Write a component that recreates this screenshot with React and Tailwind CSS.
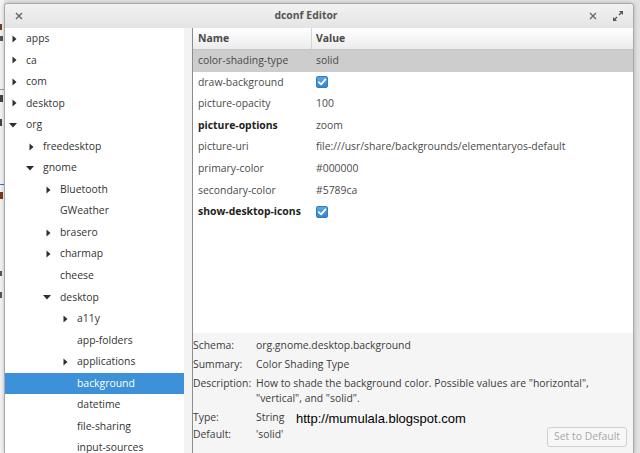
import React from "react";

const tree = [
  { name: "apps", level: 0, arrow: "right" },
  { name: "ca", level: 0, arrow: "right" },
  { name: "com", level: 0, arrow: "right" },
  { name: "desktop", level: 0, arrow: "right" },
  { name: "org", level: 0, arrow: "down" },
  { name: "freedesktop", level: 1, arrow: "right" },
  { name: "gnome", level: 1, arrow: "down" },
  { name: "Bluetooth", level: 2, arrow: "right" },
  { name: "GWeather", level: 2 },
  { name: "brasero", level: 2, arrow: "right" },
  { name: "charmap", level: 2, arrow: "right" },
  { name: "cheese", level: 2 },
  { name: "desktop", level: 2, arrow: "down" },
  { name: "a11y", level: 3, arrow: "right" },
  { name: "app-folders", level: 3 },
  { name: "applications", level: 3, arrow: "right" },
  { name: "background", level: 3, selected: true },
  { name: "datetime", level: 3 },
  { name: "file-sharing", level: 3 },
  { name: "input-sources", level: 3 },
];

const indent = ["pl-[4px]", "pl-[21px]", "pl-[38px]", "pl-[55px]"];

const keys = [
  { name: "color-shading-type", value: "solid", selected: true },
  { name: "draw-background", check: true },
  { name: "picture-opacity", value: "100" },
  { name: "picture-options", value: "zoom", bold: true },
  { name: "picture-uri", value: "file:///usr/share/backgrounds/elementaryos-default" },
  { name: "primary-color", value: "#000000" },
  { name: "secondary-color", value: "#5789ca" },
  { name: "show-desktop-icons", check: true, bold: true },
];

function Arrow({ dir }) {
  return (
    <svg width="8" height="8" viewBox="0 0 8 8" className="shrink-0">
      {dir === "right" && <polygon points="3.5,0.5 7.5,4 3.5,7.5" fill="#2e2e2e" />}
      {dir === "down" && <polygon points="0,2 8,2 4,6.5" fill="#2e2e2e" />}
    </svg>
  );
}

function Check() {
  return (
    <span className="flex h-[12px] w-[12px] items-center justify-center rounded-[2px] border border-[#2f7dc4] bg-gradient-to-b from-[#5aa6e6] to-[#3486d0]">
      <svg width="10" height="10" viewBox="0 0 10 10">
        <path d="M1.8 5.2 L4.1 7.4 L8.4 2.4" fill="none" stroke="#fff" strokeWidth="1.8" strokeLinecap="round" strokeLinejoin="round" />
      </svg>
    </span>
  );
}

export default function App() {
  return (
    <div
      className="flex h-[453px] w-[640px] overflow-hidden bg-[#e6e6e6] text-[10.4px]"
      style={{ fontFamily: '"Open Sans", "DejaVu Sans", sans-serif' }}
    >
      {/* bit of another window behind */}
      <div className="flex w-[4px] shrink-0 flex-col bg-[#f4f4f4]">
        <div className="mt-[24px] h-[6px] w-[2px] bg-[#7a3b1a]" />
        <div className="mt-[6px] h-[5px] w-[3px] bg-[#555]" />
        <div className="mt-[48px] h-px w-[4px] bg-[#999]" />
        <div className="mt-[5px] h-[7px] w-[3px] bg-[#444]" />
        <div className="mt-[17px] h-[7px] w-[2px] bg-[#444]" />
        <div className="mt-[58px] h-px w-[4px] bg-[#3d6fd6]" />
        <div className="mt-[7px] h-[7px] w-[3px] bg-[#7a3b1a]" />
        <div className="mt-[72px] h-[5px] w-[2px] bg-[#555]" />
        <div className="mt-[16px] h-[6px] w-[2px] bg-[#555]" />
      </div>

      <div className="flex w-[630px] shrink-0 flex-col pt-[3px]">
        <div className="relative flex flex-1 flex-col overflow-hidden rounded-t-[4px] border border-b-0 border-[#a9a9a9] bg-white shadow-[0_0_4px_rgba(0,0,0,0.25)]">
          {/* title bar */}
          <div className="flex h-[24px] shrink-0 items-center justify-between bg-gradient-to-b from-[#f2f2f2] to-[#e4e4e4] px-[9px]">
            <svg width="10" height="10" viewBox="0 0 10 10">
              <path d="M2 2 L8 8 M8 2 L2 8" stroke="#6a6a6a" strokeWidth="1.5" />
            </svg>
            <span className="font-bold text-[#555]">dconf Editor</span>
            <div className="flex items-center gap-[14px]">
              <svg width="10" height="10" viewBox="0 0 10 10">
                <path d="M2 2 L8 8 M8 2 L2 8" stroke="#6a6a6a" strokeWidth="1.4" />
              </svg>
              <svg width="12" height="12" viewBox="0 0 12 12">
                <path d="M7 5 L10.5 1.5 M1.5 10.5 L5 7" stroke="#555" strokeWidth="1.4" />
                <polygon points="7,1 11,1 11,5" fill="#555" />
                <polygon points="1,7 1,11 5,11" fill="#555" />
              </svg>
            </div>
          </div>

          <div className="flex min-h-0 flex-1">
            {/* tree */}
            <div className="flex w-[179px] shrink-0 flex-col bg-white text-[#333]">
              {tree.map((t, i) => (
                <div
                  key={i}
                  className={`flex h-[21.55px] shrink-0 items-center ${indent[t.level]} ${
                    t.selected ? "bg-[#3d91d8] text-white" : ""
                  }`}
                >
                  <Arrow dir={t.arrow} />
                  <span className="ml-[9px]">{t.name}</span>
                </div>
              ))}
            </div>
            <div className="w-[9px] shrink-0 border-r border-[#8c8c8c] bg-[#f3f3f3]" />

            {/* right side */}
            <div className="flex min-w-0 flex-1 flex-col">
              <div className="flex h-[22px] shrink-0 items-center border-b border-[#c4c4c4] bg-gradient-to-b from-white to-[#ececec] font-bold text-[#4a4a4a]">
                <span className="w-[118px] pl-[5px]">Name</span>
                <span className="h-full border-l border-[#d6d6d6]" />
                <span className="pl-[4px]">Value</span>
              </div>
              <div className="flex h-[283px] shrink-0 flex-col bg-white text-[#4a4a4a]">
                {keys.map((k) => (
                  <div
                    key={k.name}
                    className={`flex h-[21.6px] shrink-0 items-center ${k.selected ? "bg-[#cdcdcd]" : ""}`}
                  >
                    <span className={`w-[118px] pl-[5px] ${k.bold ? "font-bold text-[#222]" : ""}`}>{k.name}</span>
                    <span className="pl-[5px]">{k.check ? <Check /> : k.value}</span>
                  </div>
                ))}
              </div>
              <div className="relative flex-1 bg-[#f5f5f5] pt-[5px] text-[#3c3c3c]">
                <div className="grid grid-cols-[63px_1fr] gap-y-[4px] leading-[15px]">
                  <span>Schema:</span>
                  <span>org.gnome.desktop.background</span>
                  <span>Summary:</span>
                  <span>Color Shading Type</span>
                  <span>Description:</span>
                  <span>
                    How to shade the background color. Possible values are "horizontal",
                    <br />
                    "vertical", and "solid".
                  </span>
                  <span>Type:</span>
                  <span>String</span>
                  <span className="-mt-[2px]">Default:</span>
                  <span className="-mt-[2px]">'solid'</span>
                </div>
                <button className="absolute bottom-[6px] right-[6px] h-[20px] rounded-[3px] border border-[#d0d0d0] bg-[#f7f7f7] px-[6px] text-[#a8a8a8]">
                  Set to Default
                </button>
                <span
                  className="absolute left-[103px] top-[76px] text-[13px] text-black"
                  style={{ fontFamily: '"Liberation Sans", Arial, sans-serif' }}
                >
                  http://mumulala.blogspot.com
                </span>
              </div>
            </div>
          </div>
        </div>
      </div>
      <div className="flex-1 bg-[#e2e2e2]" />
    </div>
  );
}
